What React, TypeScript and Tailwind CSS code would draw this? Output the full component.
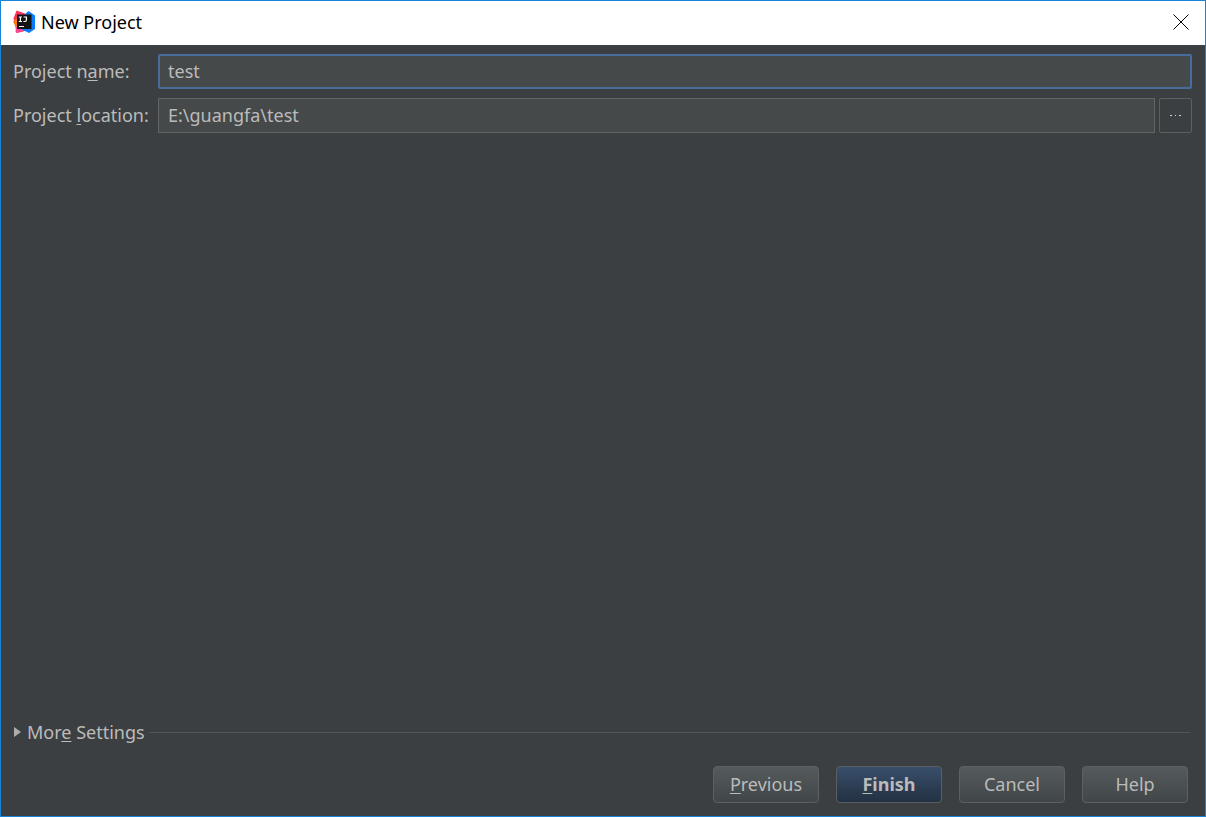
import React, { useState } from "react";

const IdeaLogo: React.FC = () => (
  <svg width="24" height="24" viewBox="0 0 24 24" aria-hidden="true">
    <path d="M4.5 0.5 L13 3.5 L17 20 L4.5 23 L3.5 17 L1.5 8.5 Z" fill="#fe315d" />
    <path d="M1 11.5 L5 8.5 L6 18 L3.5 16.5 Z" fill="#f97a12" />
    <path d="M4 17 L12 17 L12 20 L5 23 L3.5 22 Z" fill="#ff4594" />
    <path d="M12 5 L16.5 1 L23 5.5 V19 L17 23 L10 19.5 Z" fill="#087cfa" />
    <rect x="5" y="4.5" width="14.5" height="14.5" fill="#141414" />
    <path
      d="M6.8 7 H10 M8.4 7 V11.5 M6.8 11.5 H10 M11.6 7 H14.4 V10 Q14.4 11.5 13 11.5 H11.4"
      fill="none"
      stroke="#fff"
      strokeWidth="1.2"
    />
    <path d="M7 16.5 H12" stroke="#fff" strokeWidth="1" />
  </svg>
);

interface ButtonProps {
  children: React.ReactNode;
  primary?: boolean;
}

const DialogButton: React.FC<ButtonProps> = ({ children, primary }) => (
  <button
    type="button"
    className={
      primary
        ? "h-[37px] w-[106px] rounded border border-[#5b5f61] bg-linear-to-b from-[#384f6b] to-[#233143] pb-0.5 font-bold"
        : "h-[37px] w-[106px] rounded border border-[#5e6060] bg-linear-to-b from-[#555a5c] to-[#414648] pb-0.5"
    }
  >
    {children}
  </button>
);

const Mnemonic: React.FC<{ children: string }> = ({ children }) => (
  <span className="underline decoration-1 underline-offset-2">{children}</span>
);

const App: React.FC = () => {
  const [name, setName] = useState("test");
  const [location, setLocation] = useState("E:\\guangfa\\test");

  return (
    <div className="flex min-h-screen flex-col border border-[#1883d7] bg-[#3c3f41] font-['Noto_Sans','Noto_Sans_CJK_SC',sans-serif] text-lg text-[#bbbbbb]">
      <header className="flex h-11 items-center gap-[5px] bg-white pr-4 pb-0.5 pl-[11px] text-black">
        <IdeaLogo />
        <h1 className="flex-1">New Project</h1>
        <button type="button" aria-label="Close">
          <svg width="16" height="16" viewBox="0 0 16 16">
            <path d="M0.5 0.5 L15.5 15.5 M15.5 0.5 L0.5 15.5" stroke="#000" strokeWidth="1" />
          </svg>
        </button>
      </header>

      <form className="flex flex-1 flex-col">
        <div className="grid grid-cols-[145px_1fr] items-center gap-y-[9px] pt-[9px] pr-[13px] pl-3">
          <label htmlFor="name" className="pb-0.5 whitespace-nowrap">
            Project n<Mnemonic>a</Mnemonic>me:
          </label>
          <input
            id="name"
            type="text"
            value={name}
            onChange={(e) => setName(e.target.value)}
            className="h-[35px] w-full rounded-xs border-2 border-[#466d9b] bg-[#45494a] px-2 pb-0.5 outline-none"
          />
          <label htmlFor="location" className="pb-0.5 whitespace-nowrap">
            Project <Mnemonic>l</Mnemonic>ocation:
          </label>
          <div className="flex gap-1">
            <input
              id="location"
              type="text"
              value={location}
              onChange={(e) => setLocation(e.target.value)}
              className="h-[35px] min-w-0 flex-1 border border-[#646464] bg-[#45494a] px-[9px] pb-0.5 outline-none"
            />
            <button
              type="button"
              aria-label="Browse"
              className="flex h-[35px] w-[33px] items-center justify-center rounded-xs border border-[#5e6060]"
            >
              <svg width="11" height="1" viewBox="0 0 11 1" shapeRendering="crispEdges">
                <path d="M0 0.5 H2 M5 0.5 H6 M9 0.5 H11" stroke="#d0d0d0" strokeWidth="1" />
              </svg>
            </button>
          </div>
        </div>

        <div className="mt-auto flex items-center gap-1 pr-[15px] pl-3">
          <button type="button" className="flex items-center gap-1.5">
            <svg width="8" height="10" viewBox="0 0 8 10">
              <path d="M1 0 L8 5 L1 10 Z" fill="#adadad" />
            </svg>
            <span>
              Mor<Mnemonic>e</Mnemonic> Settings
            </span>
          </button>
          <hr className="flex-1 border-[#555555]" />
        </div>

        <div className="flex justify-end gap-[17px] pt-5 pr-[17px] pb-[13px]">
          <DialogButton>
            <Mnemonic>P</Mnemonic>revious
          </DialogButton>
          <DialogButton primary>
            <Mnemonic>F</Mnemonic>inish
          </DialogButton>
          <DialogButton>Cancel</DialogButton>
          <DialogButton>Help</DialogButton>
        </div>
      </form>
    </div>
  );
};

export default App;
